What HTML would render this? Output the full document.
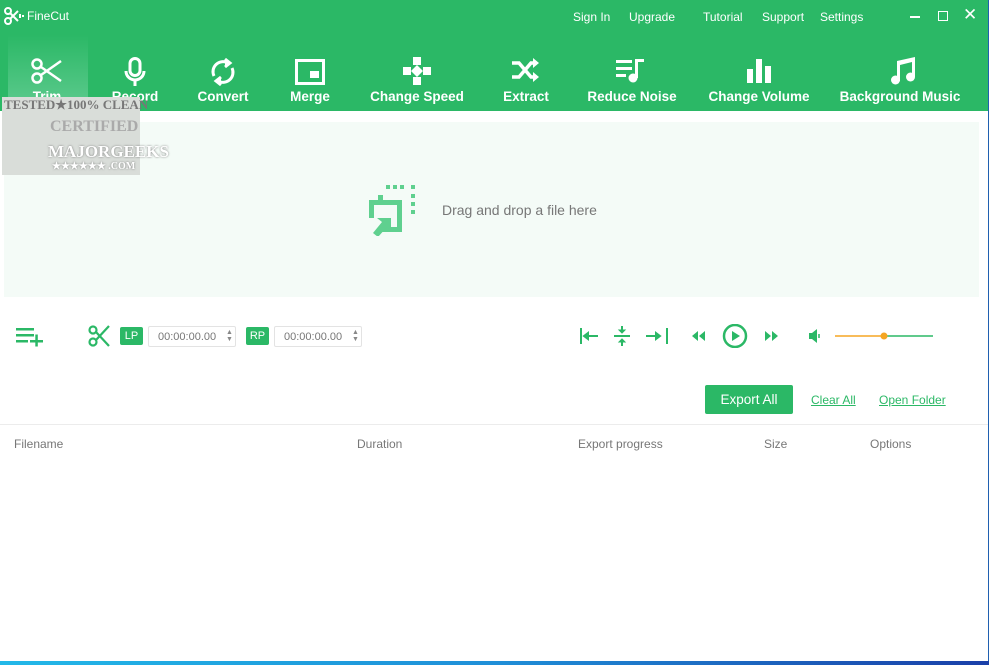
<!DOCTYPE html>
<html><head><meta charset="utf-8"><style>
*{margin:0;padding:0;box-sizing:border-box}
body{width:989px;height:665px;position:relative;background:#fff;font-family:"Liberation Sans",sans-serif;overflow:hidden}
.hdr{position:absolute;left:0;top:0;width:989px;height:111px;background:#2bb866}
.t{position:absolute;color:#fff;font-size:12px}
.nav{position:absolute;top:89px;color:#fff;font-weight:bold;font-size:13.5px;text-align:center;transform:translateX(-50%);white-space:nowrap}
.ic{position:absolute;transform:translate(-50%,0);top:57px}
.drop{position:absolute;left:4px;top:122px;width:975px;height:175px;background:#f4fbf7}
.inp{position:absolute;top:326px;width:88px;height:21px;border:1px solid #e3e3e3;border-radius:2px;font-size:11px;color:#777;padding:4px 0 0 9px}
.tag{position:absolute;top:327px;width:23px;height:18px;background:#2bb866;color:#fff;font-size:11px;border-radius:2px;text-align:center;line-height:18px}
.th{position:absolute;top:437px;font-size:12px;color:#777}
a{position:absolute;font-size:12px;color:#2bb866;text-decoration:underline}
</style></head><body>
<div class="hdr">
<svg style="position:absolute;left:4px;top:7px" width="20" height="18" viewBox="0 0 20 18" fill="none" stroke="#fff" stroke-width="2"><circle cx="4" cy="4" r="3"/><circle cx="4" cy="14" r="3"/><path d="M6 6L14 14M6 12L14 4"/><path d="M16 7v4M19 8v2"/></svg>
<div class="t" style="left:27px;top:9px;font-size:12px">FineCut</div>
<div class="t" style="left:573px;top:10px">Sign In</div>
<div class="t" style="left:629px;top:10px">Upgrade</div>
<div class="t" style="left:703px;top:10px">Tutorial</div>
<div class="t" style="left:762px;top:10px">Support</div>
<div class="t" style="left:820px;top:10px">Settings</div>
<div style="position:absolute;left:910px;top:16px;width:10px;height:2px;background:#fff"></div>
<div style="position:absolute;left:938px;top:11px;width:10px;height:10px;border:1.5px solid #fff"></div>
<div class="t" style="left:963px;top:5px;font-size:17px">✕</div>
<div style="position:absolute;left:8px;top:35px;width:80px;height:76px;background:linear-gradient(#2bb866,#5fcb8f)"></div>
<svg class="ic" style="left:47px" width="32" height="28" viewBox="0 0 32 28" fill="none" stroke="#fff" stroke-width="2.5"><circle cx="6" cy="7" r="4.5"/><circle cx="6" cy="21" r="4.5"/><path d="M10 10L30 24M10 18L30 4"/></svg>
<svg class="ic" style="left:135px" width="22" height="30" viewBox="0 0 22 30" fill="none" stroke="#fff" stroke-width="3"><rect x="6" y="1.5" width="10" height="17" rx="5"/><path d="M2 14a9 9 0 0 0 18 0M11 23v6"/></svg>
<svg class="ic" style="left:223px" width="26" height="30" viewBox="0 0 26 30" fill="none" stroke="#fff" stroke-width="3"><path d="M4 19A10 10 0 0 1 18 6M22 11A10 10 0 0 1 8 24"/><path d="M15 2l5 4-5 4M11 20l-5 4 5 4" fill="#fff"/></svg>
<svg class="ic" style="left:310px;top:59px" width="30" height="26" viewBox="0 0 30 26" fill="none" stroke="#fff" stroke-width="3"><rect x="1.5" y="1.5" width="27" height="23"/><rect x="15" y="12" width="9" height="7" fill="#fff" stroke="none"/></svg>
<svg class="ic" style="left:417px" width="28" height="28" viewBox="0 0 28 28" fill="#fff"><path d="M10 0h8v8h-8zM0 10h8v8H0zM20 10h8v8h-8zM10 20h8v8h-8zM14 8l6 6-6 6-6-6z"/></svg>
<svg class="ic" style="left:526px" width="30" height="26" viewBox="0 0 30 26" fill="none" stroke="#fff" stroke-width="3.5"><path d="M1 6h7l12 14h5M1 20h7l12-14h5"/><path d="M22 1l6 5-6 5zM22 15l6 5-6 5z" fill="#fff" stroke="none"/></svg>
<svg class="ic" style="left:631px" width="30" height="26" viewBox="0 0 30 26" fill="#fff"><rect x="0" y="3" width="16" height="3"/><rect x="0" y="10" width="16" height="3"/><rect x="0" y="17" width="10" height="3"/><rect x="19" y="2" width="3" height="19"/><rect x="19" y="2" width="9" height="3"/><circle cx="17" cy="21" r="4.5"/></svg>
<svg class="ic" style="left:759px" width="24" height="26" viewBox="0 0 24 26" fill="#fff"><rect x="0" y="12" width="6" height="14"/><rect x="9" y="2" width="6" height="24"/><rect x="18" y="9" width="6" height="17"/></svg>
<svg class="ic" style="left:903px" width="26" height="28" viewBox="0 0 26 28" fill="#fff"><path d="M7 4L25 0v20h-3V5L10 8v16H7z"/><circle cx="5.5" cy="23" r="4.5"/><circle cx="20.5" cy="20" r="4.5"/></svg>
<div class="nav" style="left:47px">Trim</div>
<div class="nav" style="left:135px">Record</div>
<div class="nav" style="left:223px">Convert</div>
<div class="nav" style="left:310px">Merge</div>
<div class="nav" style="left:417px">Change Speed</div>
<div class="nav" style="left:526px">Extract</div>
<div class="nav" style="left:632px">Reduce Noise</div>
<div class="nav" style="left:759px">Change Volume</div>
<div class="nav" style="left:900px">Background Music</div>
</div>
<div class="drop"></div>
<div style="position:absolute;left:2px;top:97px;width:138px;height:78px;background:#d9ddd9"></div>
<div style="position:absolute;left:4px;top:97px;font:bold 13px 'Liberation Serif',serif;color:#777;white-space:nowrap">TESTED★100% CLEAN</div>
<div style="position:absolute;left:50px;top:118px;font:bold 16px 'Liberation Serif',serif;color:#aaa">CERTIFIED</div>
<div style="position:absolute;left:48px;top:142px;font:bold 17px 'Liberation Serif',serif;color:#fff;text-shadow:0 0 2px #777">MAJORGEEKS</div>
<div style="position:absolute;left:52px;top:161px;font:bold 10px 'Liberation Serif',serif;color:#fff;text-shadow:0 0 2px #777;white-space:nowrap">★★★★★★ .COM</div>
<svg style="position:absolute;left:367px;top:184px" width="52" height="52" viewBox="0 0 52 52" fill="#5fd08f"><path d="M19 1h4v4h-4zM26 1h4v4h-4zM33 1h4v4h-4zM44 1h4v4h-4zM44 10h4v4h-4zM44 18h4v4h-4zM44 26h4v4h-4z"/><path d="M11 11v5H2v18h5V21h23v22H12v5h23V16H16v-5z"/><path d="M6 49l9-11-5-4h14v14l-4-5-9 10z"/></svg>
<div style="position:absolute;left:442px;top:202px;font-size:14px;color:#777">Drag and drop a file here</div>
<svg style="position:absolute;left:16px;top:327px" width="28" height="20" viewBox="0 0 28 20" fill="#2bb866"><rect x="0" y="1" width="18" height="2.5"/><rect x="0" y="7" width="18" height="2.5"/><rect x="0" y="13" width="12" height="2.5"/><rect x="14" y="13" width="13" height="2.5"/><rect x="19.3" y="7.5" width="2.5" height="12"/></svg>
<svg style="position:absolute;left:88px;top:325px" width="22" height="22" viewBox="0 0 22 22" fill="none" stroke="#2bb866" stroke-width="2.2"><circle cx="5" cy="5" r="3.5"/><circle cx="5" cy="17" r="3.5"/><path d="M8 7l13 14M8 15L21 1"/></svg>
<div class="tag" style="left:120px">LP</div>
<div class="inp" style="left:148px">00:00:00.00</div>
<div class="tag" style="left:246px">RP</div>
<div class="inp" style="left:274px">00:00:00.00</div>
<div style="position:absolute;left:226px;top:329px;font-size:7px;color:#888;line-height:7px">▲<br>▼</div>
<div style="position:absolute;left:352px;top:329px;font-size:7px;color:#888;line-height:7px">▲<br>▼</div>
<svg style="position:absolute;left:578px;top:324px" width="360" height="24" viewBox="0 0 360 24" fill="#2bb866" stroke="#2bb866">
<path d="M3 4v16M6 12h14M6 12l4-3v6z" stroke-width="2"/>
<path d="M36 12h16M44 2v6M44 16v6" stroke-width="2"/><path d="M41 6h6l-3 3zM41 18h6l-3-3z"/>
<path d="M68 12h14M89 4v16M82 12l-4-3v6z" stroke-width="2"/>
<path d="M120 7l-6 5 6 5zM127 7l-6 5 6 5z" stroke="none"/>
<circle cx="157" cy="12" r="11" fill="none" stroke-width="2.5"/><path d="M154 7l8 5-8 5z" stroke="none"/>
<path d="M187 7l6 5-6 5zM194 7l6 5-6 5z" stroke="none"/>
<path d="M231 9h3l5-4v14l-5-4h-3z" stroke="none"/><path d="M241 10v4" stroke-width="1.5"/>
<path d="M257 12h49" stroke="#f5a623" stroke-width="1.5"/><path d="M306 12h49" stroke-width="1.5"/>
<circle cx="306" cy="12" r="3.5" fill="#f5a623" stroke="none"/>
</svg>
<div style="position:absolute;left:705px;top:385px;width:88px;height:29px;background:#2bb866;border-radius:2px;color:#fff;font-size:13.5px;text-align:center;line-height:29px">Export All</div>
<a style="left:811px;top:393px">Clear All</a>
<a style="left:879px;top:393px">Open Folder</a>
<div style="position:absolute;left:0;top:424px;width:989px;height:1px;background:#ececec"></div>
<div class="th" style="left:14px">Filename</div>
<div class="th" style="left:357px">Duration</div>
<div class="th" style="left:578px">Export progress</div>
<div class="th" style="left:764px">Size</div>
<div class="th" style="left:870px">Options</div>
<div style="position:absolute;right:0;top:0;width:1px;height:665px;background:#2060b0"></div>
<div style="position:absolute;left:0;top:661px;width:989px;height:4px;background:linear-gradient(90deg,#22b8e8,#1f8fd8 50%,#1a3fa8)"></div>
</body></html>
